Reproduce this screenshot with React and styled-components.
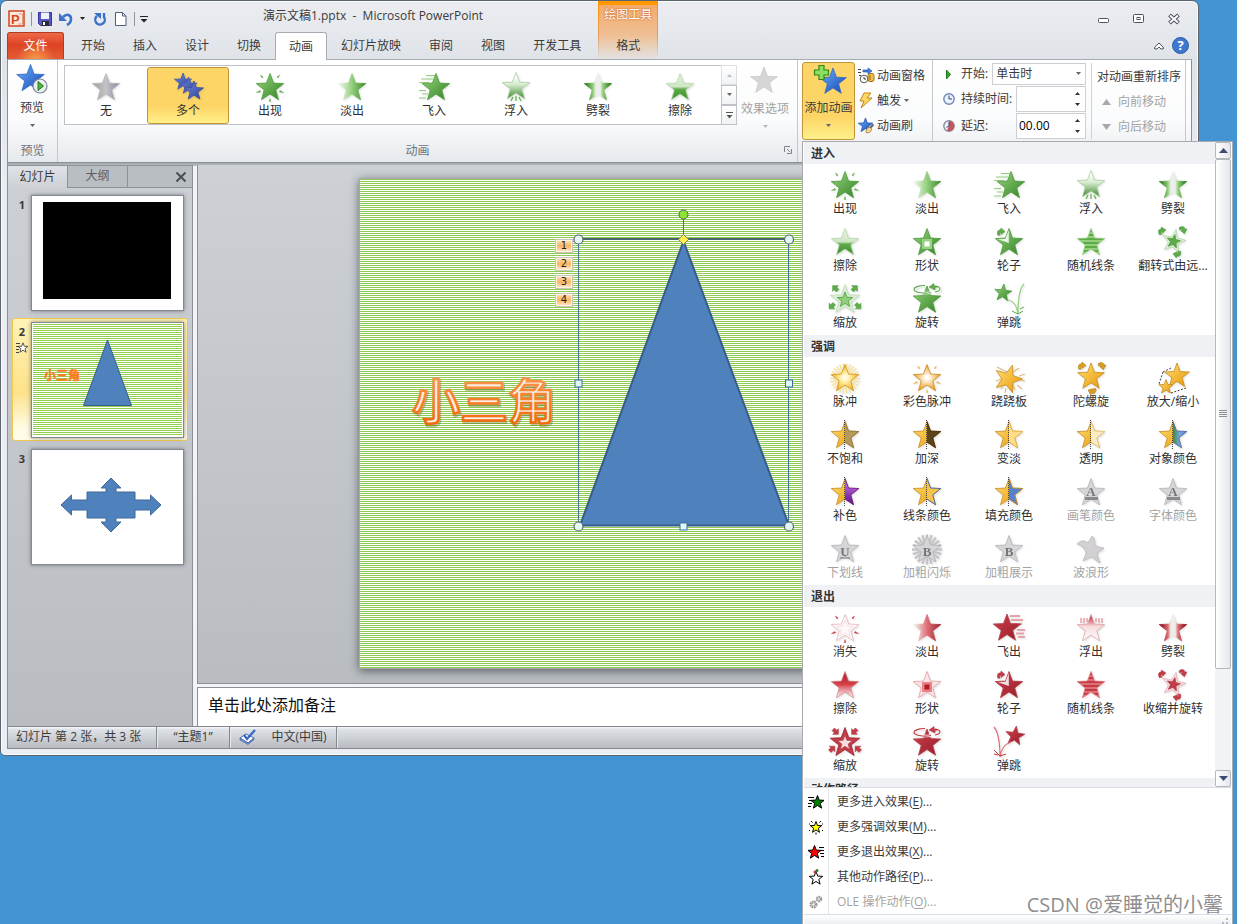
import { useState } from "react";
import styled, { createGlobalStyle } from "styled-components";

const GlobalStyle = createGlobalStyle`
  * { box-sizing: border-box; }
  body {
    margin: 0;
    background: #4294d3;
    color: #3b3b3b;
    font: 12px/16px "Open Sans", "Noto Sans CJK SC", sans-serif;
  }
  button, input, select { font: inherit; color: inherit; }
  button { padding: 0; border: none; background: none; white-space: nowrap; }
  svg { display: block; flex: none; }
`;

/* ---------- drawing helpers ---------- */

const starPoints = (cx, cy, r, turn = 0, k = 0.42) => {
  const pts = [];
  for (let i = 0; i < 10; i++) {
    const a = ((i * 36 + turn - 90) * Math.PI) / 180;
    const d = i % 2 ? r * k : r;
    pts.push(`${(cx + d * Math.cos(a)).toFixed(2)},${(cy + d * Math.sin(a)).toFixed(2)}`);
  }
  return pts.join(" ");
};

const Star = ({ x = 16, y = 17, r = 14.5, turn, ...rest }) => (
  <polygon points={starPoints(x, y, r, turn)} strokeWidth="0.8" strokeLinejoin="round" {...rest} />
);

const tones = {
  green: { dark: "#3c8a2b", mid: "#5eab49", light: "#93cf7c", pale: "#d9ecd2", line: "#4c9a3c" },
  red: { dark: "#9c1f2c", mid: "#c23b45", light: "#de7178", pale: "#f6dcdd", line: "#b2404a" },
};

const Gradients = () => (
  <Defs aria-hidden="true">
    <defs>
      {Object.entries(tones).map(([name, t]) => (
        <g key={name}>
          <linearGradient id={`${name}-solid`} x2="1" y2="1">
            <stop offset="0.2" stopColor={name === "red" ? t.mid : "#84c56c"} />
            <stop offset="0.9" stopColor={t.dark} />
          </linearGradient>
          <linearGradient id={`${name}-fade`}>
            <stop offset="0" stopColor="#f4faf1" />
            <stop offset="0.5" stopColor={t.light} />
            <stop offset="1" stopColor={t.dark} />
          </linearGradient>
          <linearGradient id={`${name}-rise`} x2="0" y2="1">
            <stop offset="0.1" stopColor={name === "red" ? t.mid : "#fff"} />
            <stop offset="0.45" stopColor={t.pale} />
            <stop offset="1" stopColor={name === "red" ? "#fff" : t.dark} />
          </linearGradient>
          <linearGradient id={`${name}-split`}>
            <stop offset="0.1" stopColor={t.dark} />
            <stop offset="0.32" stopColor={t.light} />
            <stop offset="0.42" stopColor="#ecefe9" />
            <stop offset="0.58" stopColor="#ecefe9" />
            <stop offset="0.68" stopColor={t.light} />
            <stop offset="0.9" stopColor={t.dark} />
          </linearGradient>
          <linearGradient id={`${name}-wipe`} x2="0" y2="1">
            <stop offset="0" stopColor={name === "red" ? t.dark : "#e6f2e1"} />
            <stop offset="0.5" stopColor={name === "red" ? "#d84048" : "#cfe6c6"} />
            <stop offset="0.6" stopColor={name === "red" ? t.light : t.mid} />
            <stop offset="1" stopColor={name === "red" ? "#fff" : t.dark} />
          </linearGradient>
          <linearGradient id={`${name}-bars`} gradientUnits="userSpaceOnUse" x1="0" y1="0" x2="0" y2="4" spreadMethod="repeat">
            <stop offset="0" stopColor={t.mid} />
            <stop offset="0.5" stopColor={t.mid} />
            <stop offset="0.5" stopColor={t.light} />
            <stop offset="1" stopColor={t.light} />
          </linearGradient>
        </g>
      ))}
      <linearGradient id="gold" x2="1" y2="1">
        <stop offset="0.2" stopColor="#fbd25c" />
        <stop offset="0.9" stopColor="#ea9c10" />
      </linearGradient>
      <radialGradient id="glow">
        <stop offset="0" stopColor="#fff" />
        <stop offset="0.3" stopColor="#fff3b0" />
        <stop offset="1" stopColor="#f3b021" />
      </radialGradient>
      <radialGradient id="glow-warm">
        <stop offset="0.1" stopColor="#fff" />
        <stop offset="1" stopColor="#ef9f1a" />
      </radialGradient>
      <linearGradient id="gray" x2="1" y2="0">
        <stop offset="0.2" stopColor="#ababab" />
        <stop offset="0.5" stopColor="#c4c4c4" />
        <stop offset="1" stopColor="#7f88a5" />
      </linearGradient>
      <linearGradient id="blue" x2="1" y2="1">
        <stop offset="0.2" stopColor="#5c9df0" />
        <stop offset="0.9" stopColor="#1c50b8" />
      </linearGradient>
      <linearGradient id="indigo" x2="1" y2="1">
        <stop offset="0" stopColor="#7388d8" />
        <stop offset="1" stopColor="#2b409c" />
      </linearGradient>
      <linearGradient id="purple" x2="0" y2="1">
        <stop offset="0.3" stopColor="#b25ada" />
        <stop offset="1" stopColor="#5c1586" />
      </linearGradient>
      <linearGradient id="green-blue">
        <stop offset="0.5" stopColor="#3a8c38" />
        <stop offset="0.75" stopColor="#7ba7e6" />
        <stop offset="1" stopColor="#4a78cc" />
      </linearGradient>
      <linearGradient id="orange-line" x2="0" y2="1">
        <stop offset="0.1" stopColor="#fb9a54" />
        <stop offset="0.9" stopColor="#f06a08" />
      </linearGradient>
      <clipPath id="right-half">
        <rect x="16" y="0" width="16" height="32" />
      </clipPath>
    </defs>
  </Defs>
);

const Rays = ({ color }) => (
  <path
    d="M6.500 4l2.500 2-1 1zM25.500 4l-2.500 2 1 1zM2.500 21.500l3.500-2 .5 1.500zM29.500 21.500l-3.500-2-.5 1.500zM15.300 30.500l.7-3 .7 3z"
    fill={color}
    stroke={color}
    strokeWidth="0.5"
  />
);

const BlockArrow = ({ x, y, turn, color }) => (
  <path
    d="M0-4.500L4.500 0H2v3.500h-4V0h-2.500z"
    transform={`translate(${x} ${y}) rotate(${turn}) scale(.9)`}
    fill={color.mid}
    stroke={color.line}
    strokeWidth="0.6"
  />
);

const CurvedArrow = ({ x, y, turn = 0, color, stroke }) => (
  <path
    d="M-4 4c-1.500-5 .5-7 3.500-6.500l.5-2.500L5-.5 0 3V.5c-1.500 0-2 1-1 3.500z"
    transform={`translate(${x} ${y}) rotate(${turn}) scale(.8)`}
    fill={color}
    stroke={stroke}
    strokeWidth="0.7"
  />
);

const sweep = (n, r1, r2, color, width = 1) =>
  Array.from({ length: n }, (_, i) => {
    const a = (i * 2 * Math.PI) / n;
    return (
      <line
        key={i}
        x1={16 + r1 * Math.cos(a)}
        y1={16.5 + r1 * Math.sin(a)}
        x2={16 + r2 * Math.cos(a)}
        y2={16.5 + r2 * Math.sin(a)}
        stroke={color}
        strokeWidth={width}
      />
    );
  });

const halves = {
  dull: ["#b59a5c", "#8e7440"],
  dark: ["#5a451a", "#3c2c08"],
  light: ["#fddc8a", "#e9b54c"],
  clear: ["#faebc4", "#e6c882"],
  object: ["url(#green-blue)", "#4a74c0"],
  purple: ["url(#purple)", "#6c1f96"],
  line: ["#f7c54c", "#2c5fb4"],
  fill: ["#5582cc", "#c08a26"],
};

const shapes = {
  appear: (t, n) => (
    <>
      <Star fill={`url(#${n}-solid)`} stroke={t.line} />
      <Rays color={t.mid} />
    </>
  ),
  vanish: (t) => (
    <>
      <Star fill="#fff" stroke="#e6b4b8" />
      <Star r={9} fill="#fffafa" stroke="#f2d4d6" />
      <Rays color={t.mid} />
    </>
  ),
  fade: (t, n) => <Star fill={`url(#${n}-fade)`} stroke={`url(#${n}-fade)`} />,
  flyIn: (t, n) => (
    <>
      <path d="M8 4.500h9M3 8h12M1 11.500h10M1 19.500h7M4 23h6M1 27h7" stroke={t.light} strokeWidth="1.200" />
      <Star x={18} fill={`url(#${n}-solid)`} stroke={t.line} />
    </>
  ),
  flyOut: (t, n) => (
    <>
      <path d="M17 4h10M18 8h12M20 12h9M24 18h8M23 21.500h8M25 25h7" stroke="#e3a3a8" strokeWidth="1.800" />
      <Star x={14} y={16.5} fill={`url(#${n}-solid)`} stroke={t.line} />
    </>
  ),
  floatIn: (t, n) => (
    <>
      <Star y={16} fill={`url(#${n}-rise)`} stroke="#a9cfa0" />
      <path d="M16 25v5M13 26l-2 4M19 26l2 4" stroke={t.mid} strokeWidth="1.200" />
    </>
  ),
  floatOut: (t, n) => (
    <>
      <Star fill={`url(#${n}-rise)`} stroke="#dda6aa" />
      <path d="M6 6v5M9 6v5M12 6v4M21 6v4M24 6v5M27 6v5" stroke={t.light} strokeWidth="1" />
    </>
  ),
  split: (t, n) => <Star fill={`url(#${n}-split)`} stroke={`url(#${n}-split)`} />,
  wipe: (t, n) => <Star fill={`url(#${n}-wipe)`} stroke={n === "red" ? "#d3868c" : "#b7d8ac"} />,
  shape: (t, n) => (
    <>
      <Star fill={n === "red" ? "#fbe4e5" : `url(#${n}-solid)`} stroke={n === "red" ? "#dfa0a5" : t.line} />
      <rect x="11" y="13" width="10" height="10" fill={n === "red" ? "#ec8288" : "#9ad284"} />
      <rect x="13.500" y="15.500" width="5" height="5" fill={n === "red" ? "#b01c26" : "#fff"} />
    </>
  ),
  wheel: (t, n) => (
    <>
      <Star fill={`url(#${n}-solid)`} stroke={t.line} />
      <path d="M15.800 4v13L5 13.300l7.500-.6z" fill="#fff" opacity="0.85" />
      <CurvedArrow x={8} y={6} color={t.mid} stroke={t.line} />
    </>
  ),
  bars: (t, n) => <Star fill={`url(#${n}-bars)`} stroke={t.light} />,
  turnZoom: (t) => (
    <>
      <Star x={16.5} y={15.5} r={12.5} turn={12} fill={t.pale} stroke={t.line} strokeOpacity="0.3" />
      <Star x={16.5} y={15.5} r={7} turn={12} fill={t.mid} stroke={t.line} />
      <CurvedArrow x={5} y={5} turn={-10} color={t.mid} stroke={t.line} />
      <CurvedArrow x={26} y={4} turn={75} color={t.mid} stroke={t.line} />
      <CurvedArrow x={20} y={28} turn={190} color={t.mid} stroke={t.line} />
    </>
  ),
  zoom: (t, n) => {
    const out = n === "green" ? 0 : 180;
    return (
      <>
        <Star r={15.5} fill={n === "red" ? t.mid : t.pale} stroke={n === "red" ? t.dark : "#bcdcb2"} />
        <Star r={8} fill={n === "red" ? t.pale : t.light} stroke={t.line} />
        <BlockArrow x={6.5} y={5.5} turn={-45 + out} color={t} />
        <BlockArrow x={25.5} y={5.5} turn={45 + out} color={t} />
        <BlockArrow x={3} y={23} turn={-135 + out} color={t} />
        <BlockArrow x={29} y={23} turn={135 + out} color={t} />
      </>
    );
  },
  spin: (t, n) => (
    <>
      <Star y={17.5} fill={`url(#${n}-solid)`} stroke={t.line} />
      <path d="M20 9.500C12 11 3 9 3 6.500S8 2.500 14 2.500M24 3c7 1 6 5 0 6" fill="none" stroke="#fff" strokeWidth="2.600" />
      <path d="M20 9.500C12 11 3 9 3 6.500S8 2.500 14 2.500M24 3c7 1 6 5 0 6" fill="none" stroke={t.mid} strokeWidth="1.200" />
      <path d="M23 .5l-5 3.500 6 3V5l3-1.500-4-.5z" fill={t.mid} stroke={t.line} strokeWidth="0.600" />
    </>
  ),
  bounceIn: (t, n) => (
    <>
      <Star x={10} y={10} r={9} turn={6} fill={`url(#${n}-solid)`} stroke={t.line} />
      <path d="M15 17c6 1 9 7 10 14M25 31c0-12 1-25 6-30" fill="none" stroke={t.light} strokeWidth="1.200" />
      <path d="M19 28l6 3 5-3M27 26l4-2" fill="none" stroke={t.mid} strokeWidth="1" />
    </>
  ),
  bounceOut: (t, n) => (
    <>
      <Star x={22} y={10} r={10} turn={8} fill={`url(#${n}-solid)`} stroke={t.line} />
      <path d="M1 1c5 6 6 18 6 30M7 31c1-8 5-13 11-15" fill="none" stroke={t.light} strokeWidth="1.200" />
      <path d="M1 24l6 6 6-2M5 29l-4-1" fill="none" stroke={t.mid} strokeWidth="1" />
    </>
  ),
  none: () => <Star fill="url(#gray)" stroke="#b8b8b8" />,
  multi: () => (
    <>
      <Star x={11} y={11} r={9} fill="url(#indigo)" stroke="#4358aa" />
      <Star x={16.5} y={15} r={9} fill="url(#indigo)" stroke="#4358aa" />
      <Star x={22} y={20} r={10} fill="url(#indigo)" stroke="#3a4f9e" />
    </>
  ),
  pulse: () => (
    <>
      {sweep(26, 5, 15, "#f8e290", 1.3)}
      <Star fill="url(#glow)" stroke="#cf9422" />
    </>
  ),
  colorPulse: () => (
    <>
      <Star fill="url(#glow-warm)" stroke="#c88c26" />
      <Rays color="#e6b45a" />
    </>
  ),
  teeter: () => (
    <>
      <path d="M4 5l10 5M26 6l-8 5M3 19l5-2M8 27l3-6M12 31l1-5M22 28l-2-5M24 23l5 4M26 14l6-2M27 18l5 1" stroke="#e5bb80" strokeWidth="1.200" />
      <Star x={15} turn={18} fill="url(#gold)" stroke="#c58a22" />
    </>
  ),
  spinner: () => (
    <>
      <Star y={15} r={14} fill="url(#gold)" stroke="#c58a22" />
      <CurvedArrow x={7} y={4} color="#dd9f22" stroke="#a87818" />
      <CurvedArrow x={27} y={4} turn={75} color="#dd9f22" stroke="#a87818" />
      <CurvedArrow x={17} y={29} turn={200} color="#dd9f22" stroke="#a87818" />
    </>
  ),
  grow: () => (
    <>
      <path d="M6 10l-4 12M6 10l8-4M14 31l15-5" fill="none" stroke="#444" strokeDasharray="2 1.500" />
      <Star x={20} y={14} r={13} fill="url(#gold)" stroke="#c58a22" />
      <Star x={9} y={25} r={7.5} fill="url(#gold)" stroke="#c58a22" />
    </>
  ),
  wave: () => (
    <path
      d="M2 11c5-5 9-3 11-1l4-7c2 1 3 4 3 9 3 2 5 3 9 3-3 3-6 4-7 6l3 9c-3-1-6-5-9-6-3 1-5 3-8 4 1-4 3-5 3-9-2-4-5-7-9-8z"
      fill="#d2d0d3"
      stroke="#b9b7ba"
      strokeWidth="0.8"
    />
  ),
};

const EffectIcon = ({ kind, tone }) => {
  const [name, arg] = kind.split(":");
  let art;
  if (name === "half") {
    const [fill, line] = halves[arg];
    art = (
      <>
        <Star fill="url(#gold)" stroke="#c58a22" />
        <Star fill={fill} stroke={line} clipPath="url(#right-half)" />
        <path d="M15.500 1v29" stroke="#444" strokeDasharray="1 1" />
      </>
    );
  } else if (name === "letter") {
    art = (
      <>
        {arg === "B*" && sweep(20, 5, 15, "#c6c4c6", 2.4)}
        <Star fill="#d6d5d8" stroke="#b4b3b6" />
        <text x="16" y={arg === "A" ? 20 : 23} textAnchor="middle" fontFamily="Liberation Serif" fontWeight="bold" fontSize="13" fill="#77757a">
          {arg[0]}
        </text>
        {arg === "A" && <path d="M10 22.500h13" stroke="#8b898d" strokeWidth="3" />}
        {arg === "U" && <path d="M11 25h10" stroke="#77757a" />}
      </>
    );
  } else {
    art = shapes[name](tones[tone], tone);
  }
  return (
    <IconBox width="32" height="32" viewBox="0 0 32 32">
      {art}
    </IconBox>
  );
};

/* ---------- data ---------- */

const tabs = ["开始", "插入", "设计", "切换", "动画", "幻灯片放映", "审阅", "视图", "开发工具"];

const ribbonEffects = [
  ["无", "none"],
  ["多个", "multi"],
  ["出现", "appear"],
  ["淡出", "fade"],
  ["飞入", "flyIn"],
  ["浮入", "floatIn"],
  ["劈裂", "split"],
  ["擦除", "wipe"],
];

const sections = [
  {
    title: "进入",
    tone: "green",
    items: [
      ["出现", "appear"],
      ["淡出", "fade"],
      ["飞入", "flyIn"],
      ["浮入", "floatIn"],
      ["劈裂", "split"],
      ["擦除", "wipe"],
      ["形状", "shape"],
      ["轮子", "wheel"],
      ["随机线条", "bars"],
      ["翻转式由远...", "turnZoom"],
      ["缩放", "zoom"],
      ["旋转", "spin"],
      ["弹跳", "bounceIn"],
    ],
  },
  {
    title: "强调",
    tone: "gold",
    items: [
      ["脉冲", "pulse"],
      ["彩色脉冲", "colorPulse"],
      ["跷跷板", "teeter"],
      ["陀螺旋", "spinner"],
      ["放大/缩小", "grow"],
      ["不饱和", "half:dull"],
      ["加深", "half:dark"],
      ["变淡", "half:light"],
      ["透明", "half:clear"],
      ["对象颜色", "half:object"],
      ["补色", "half:purple"],
      ["线条颜色", "half:line"],
      ["填充颜色", "half:fill"],
      ["画笔颜色", "letter:A", true],
      ["字体颜色", "letter:A", true],
      ["下划线", "letter:U", true],
      ["加粗闪烁", "letter:B*", true],
      ["加粗展示", "letter:B", true],
      ["波浪形", "wave", true],
    ],
  },
  {
    title: "退出",
    tone: "red",
    items: [
      ["消失", "vanish"],
      ["淡出", "fade"],
      ["飞出", "flyOut"],
      ["浮出", "floatOut"],
      ["劈裂", "split"],
      ["擦除", "wipe"],
      ["形状", "shape"],
      ["轮子", "wheel"],
      ["随机线条", "bars"],
      ["收缩并旋转", "turnZoom"],
      ["缩放", "zoom"],
      ["旋转", "spin"],
      ["弹跳", "bounceOut"],
    ],
  },
  { title: "动作路径", tone: "green", items: [] },
];

const moreItems = [
  { label: "更多进入效果", hotkey: "E", fill: "#008000", lines: "M0 3.500h6M1 6.500h3M0 9.500h4M0 12.500h3" },
  { label: "更多强调效果", hotkey: "M", fill: "#ffff00", rays: true },
  { label: "更多退出效果", hotkey: "X", fill: "#ff0000", lines: "M11 3.500h5M13 6.500h3M12 9.500h4M13 12.500h3" },
  { label: "其他动作路径", hotkey: "P", fill: "#fff", path: true },
  { label: "OLE 操作动作", hotkey: "O", disabled: true },
];

const MoreIcon = ({ item }) => (
  <svg width="16" height="16" viewBox="0 0 16 16">
    {item.disabled ? (
      <g fill="none" stroke="#9a9a9a">
        <circle cx="5.500" cy="10.500" r="2.500" strokeWidth="3" strokeDasharray="1.500 0.500" />
        <circle cx="11" cy="5" r="2" strokeWidth="2.500" strokeDasharray="1.500 0.500" />
      </g>
    ) : (
      <>
        <Star
          x={item.lines ? (item.hotkey === "E" ? 9.5 : 6.5) : 8}
          y={item.path ? 9.5 : 8.5}
          r={item.rays ? 6 : 7}
          fill={item.fill}
          stroke="#000"
          strokeWidth="1"
        />
        {item.lines && <path d={item.lines} stroke="#000" />}
        {item.rays && (
          <path d="M3 2l1.500 1.500M13 2l-1.500 1.500M1 5h1M14 5h1M1 12l1-1M15 12l-1-1M8 13.500v2" stroke="#000" />
        )}
        {item.path && (
          <>
            <circle cx="7" cy="3" r="1.500" fill="#c33" />
            <circle cx="9" cy="1.500" r="1.500" fill="#2c7a2c" />
          </>
        )}
      </>
    )}
  </svg>
);

/* ---------- small parts ---------- */

const Caret = ({ color = "#666", up }) => (
  <svg width="7" height="4" viewBox="0 0 7 4">
    <path d={up ? "M1 4h5L3.500 1z" : "M1 0h5L3.500 3z"} fill={color} />
  </svg>
);

const EffectTile = ({ label, kind, tone, disabled, selected }) => (
  <Tile disabled={disabled} $selected={selected}>
    <EffectIcon kind={kind} tone={tone} />
    <span>{label}</span>
  </Tile>
);

const BlueStar = ({ badge }) => (
  <svg width="36" height="36" viewBox="0 0 36 36">
    {badge === "plus" && (
      <>
        <Star x={22} y={18} r={14} fill="url(#blue)" stroke="#2f66c0" />
        <path d="M7 1.500h5v4.500h4.500v5H12v4.500H7V11H2.500V6H7z" fill="#8ae060" stroke="#2d8a18" strokeWidth="1.200" transform="translate(1)" />
      </>
    )}
    {badge === "play" && (
      <>
        <Star x={16.5} y={15} r={14.5} fill="url(#blue)" stroke="#2f66c0" />
        <circle cx="26" cy="22" r="7" fill="#eceff2" stroke="#7c8590" strokeWidth="1.200" />
        <path d="M24 17.500l5.500 4.500-5.500 4.500z" fill="#48b838" stroke="#257a1c" />
      </>
    )}
    {!badge && <Star x={17} y={16} r={14} fill="#d6d6d8" stroke="#c8c8ca" />}
  </svg>
);

const Clock = ({ red }) => (
  <svg width="16" height="16" viewBox="0 0 16 16">
    <circle cx="8" cy="8" r="5.200" fill="#eaf1fb" stroke={red ? "#8a8a9a" : "#6f87b8"} strokeWidth="1.400" />
    {red && <path d="M8 8V3a5 5 0 1 1-2 9.500z" fill="#c9545a" />}
    <path d={red ? "M8 4v4L5.500 9.500" : "M8 4.500V8h3"} fill="none" stroke="#34496f" />
  </svg>
);

const PaneIcon = () => (
  <svg width="17" height="17" viewBox="0 0 17 17">
    <path d="M0 2.500h3M0 5.500h3M1 8.500h2" stroke="#444" />
    <path d="M5 3h5V1l4 3-4 3V5H5z" fill="#3f7ad8" stroke="#1f4f9c" strokeWidth="0.600" />
    <circle cx="6" cy="12" r="3.800" fill="#fff" stroke="#555" />
    <path d="M6 10v2h2" stroke="#333" fill="none" />
    <rect x="10" y="6.500" width="6" height="8" rx="2" fill="#f1c04a" stroke="#9c7014" />
    <path d="M12 8v5" stroke="#8b6414" />
  </svg>
);

const BoltIcon = () => (
  <svg width="17" height="17" viewBox="0 0 17 17">
    <path d="M6 1h7L9 6h5L3 16l3-7H2z" fill="#ffd95e" stroke="#c08420" strokeLinejoin="round" />
  </svg>
);

const BrushIcon = () => (
  <svg width="17" height="17" viewBox="0 0 17 17">
    <Star x={7.5} y={8.5} r={7.5} fill="url(#blue)" stroke="#24529f" />
    <path d="M15.500 7.500l-4 4" stroke="#5c6270" strokeWidth="2" />
    <path d="M12 10.500c-2-.5-4 1-4 5 3 1 6-1 5.500-4z" fill="#f6d68a" stroke="#9a7b34" strokeWidth="0.800" />
  </svg>
);

const QuickAccess = () => (
  <QatBar>
    <svg width="18" height="18" viewBox="0 0 18 18">
      <rect x="1" y="1" width="15" height="15" fill="#fbe9e1" stroke="#cf3a10" strokeWidth="1.400" />
      <path d="M11 4h3.500v10H10" fill="none" stroke="#e59a78" />
      <text x="3" y="13.500" fontSize="13" fontWeight="bold" fontFamily="Liberation Sans" fill="#d84a10">P</text>
    </svg>
    <QatRule />
    <QatButton aria-label="保存">
      <svg width="16" height="16" viewBox="0 0 16 16">
        <path d="M1.500 1.500h13v13h-11l-2-2z" fill="#5a58c8" stroke="#34339a" />
        <rect x="4" y="1.500" width="8" height="6.500" fill="#eef2fb" />
        <rect x="5" y="10" width="7" height="5" fill="#2a2a38" />
        <rect x="6" y="11" width="2" height="3" fill="#fff" />
      </svg>
    </QatButton>
    <QatButton aria-label="撤消">
      <svg width="16" height="16" viewBox="0 0 16 16">
        <path d="M5 6c4-4 8-2 8 2 0 3-2 5-4 6" fill="none" stroke="#3d72cc" strokeWidth="2.600" />
        <path d="M1 2v8h8z" fill="#3d72cc" />
      </svg>
    </QatButton>
    <QatCaret aria-label="撤消列表"><Caret color="#222" /></QatCaret>
    <QatButton aria-label="恢复">
      <svg width="16" height="16" viewBox="0 0 16 16">
        <path d="M5 5a4.800 4.800 0 1 0 7 1V2" fill="none" stroke="#3a6fca" strokeWidth="2.400" />
        <path d="M2 2h7v6z" fill="#3a6fca" />
      </svg>
    </QatButton>
    <QatButton aria-label="新建">
      <svg width="16" height="16" viewBox="0 0 16 16">
        <path d="M2.500 1.500h7l3.500 3.500v9.500H2.500z" fill="#fff" stroke="#4e5e74" />
        <path d="M9.500 1.500V5H13" fill="none" stroke="#4e5e74" />
      </svg>
    </QatButton>
    <QatRule />
    <QatCaret aria-label="自定义快速访问工具栏">
      <svg width="8" height="7" viewBox="0 0 8 7">
        <path d="M0 .5h8" stroke="#222" />
        <path d="M.5 3h7L4 6.500z" fill="#222" />
      </svg>
    </QatCaret>
  </QatBar>
);

const SpinField = ({ id, value, onChange }) => (
  <SpinBox>
    <input id={id} value={value} onChange={(e) => onChange(e.target.value)} />
    <div>
      <button aria-label="增加"><Caret up color="#333" /></button>
      <button aria-label="减少"><Caret color="#333" /></button>
    </div>
  </SpinBox>
);

const Handle = ({ x, y, round }) =>
  round ? (
    <circle cx={x} cy={y} r="4.500" fill="#e3f7f7" stroke="#56646e" strokeWidth="1.200" />
  ) : (
    <rect x={x - 3.5} y={y - 3.5} width="7" height="7" fill="#e0fbff" stroke="#3c7099" />
  );

const AddMenu = () => (
  <Menu>
    <MenuGallery>
      <MenuList>
        {sections.map((s) => (
          <section key={s.title}>
            <MenuHeading>{s.title}</MenuHeading>
            <TileGrid>
              {s.items.map(([label, kind, disabled]) => (
                <EffectTile key={label} label={label} kind={kind} tone={s.tone} disabled={disabled} />
              ))}
            </TileGrid>
          </section>
        ))}
      </MenuList>
      <ScrollTrack>
        <ScrollButton aria-label="向上滚动">
          <svg width="9" height="5" viewBox="0 0 9 5"><path d="M0 5h9L4.500 0z" fill="#3e4a70" /></svg>
        </ScrollButton>
        <ScrollThumb>
          <svg width="8" height="8" viewBox="0 0 8 8">
            <path d="M0 .5h8M0 2.500h8M0 4.500h8M0 6.500h8" stroke="#8b9096" />
          </svg>
        </ScrollThumb>
        <ScrollButton aria-label="向下滚动" $end>
          <svg width="9" height="5" viewBox="0 0 9 5"><path d="M0 0h9L4.500 5z" fill="#3e4a70" /></svg>
        </ScrollButton>
      </ScrollTrack>
    </MenuGallery>
    <MoreList>
      {moreItems.map((item) => (
        <MoreItem key={item.hotkey} disabled={item.disabled}>
          <MoreIcon item={item} />
          <span>
            {item.label}(<u>{item.hotkey}</u>)...
          </span>
        </MoreItem>
      ))}
    </MoreList>
    <MenuFoot>
      <svg width="10" height="10" viewBox="0 0 10 10">
        <path d="M7 1h2v2H7zM3 5h2v2H3zM7 5h2v2H7zM0 9h2v1H0zM3 9h2v1H3zM7 9h2v1H7z" fill="#b4bac2" />
      </svg>
    </MenuFoot>
  </Menu>
);

const SlideArt = () => (
  <SlideSvg width="652" height="489" viewBox="0 0 652 489">
    <g fontFamily="Noto Sans CJK SC" fontSize="48" fontWeight="500">
      <text x="53" y="242" fill="none" stroke="#55641f" strokeOpacity="0.4" strokeWidth="3">小三角</text>
      <text x="52" y="240" fill="#fdeee2" stroke="url(#orange-line)" strokeWidth="2.500">小三角</text>
    </g>
    <polygon points="323.5,62 220,346.5 429,346.5" fill="#4f81bd" stroke="#385d8a" strokeWidth="2" strokeLinejoin="round" />
    <path d="M218.500 60.500v287M428.500 60.500v287M323.500 60v-20" fill="none" stroke="#42719b" />
    <path d="M218 60h211" stroke="#4a6572" strokeWidth="2" />
    <circle cx="323.500" cy="35.500" r="4.500" fill="#8ae234" stroke="#55663f" />
    <path d="M323.500 55.500l5 5-5 5-5-5z" fill="#fff04a" stroke="#8d8a4d" />
    <Handle x={218.5} y={60.5} round />
    <Handle x={429} y={60.5} round />
    <Handle x={218.5} y={347.5} round />
    <Handle x={429} y={347.5} round />
    <Handle x={218.5} y={204.5} />
    <Handle x={429} y={204.5} />
    <Handle x={323.5} y={347.5} />
  </SlideSvg>
);

/* ---------- page ---------- */

export default function App() {
  const [start, setStart] = useState("单击时");
  const [duration, setDuration] = useState("");
  const [delay, setDelay] = useState("00.00");

  return (
    <Desktop>
      <GlobalStyle />
      <Gradients />
      <Window>
        <Header>
          <HeaderMain>
            <TitleRow>
              <QuickAccess />
              <Title>演示文稿1.pptx&nbsp; -&nbsp; Microsoft PowerPoint</Title>
            </TitleRow>
            <TabRow>
              <FileTab>文件</FileTab>
              {tabs.map((t) => (
                <Tab key={t} $active={t === "动画"}>{t}</Tab>
              ))}
            </TabRow>
          </HeaderMain>
          <ContextTabs>
            <span>绘图工具</span>
            <button>格式</button>
          </ContextTabs>
          <HeaderSide>
            <WindowButtons>
              <button aria-label="最小化">
                <svg width="12" height="12" viewBox="0 0 12 12"><rect x="0.500" y="5.500" width="10" height="4" rx="1" fill="#fff" stroke="#4c5060" /></svg>
              </button>
              <button aria-label="最大化">
                <svg width="12" height="12" viewBox="0 0 12 12"><rect x="0.500" y="1.500" width="10" height="8" rx="1" fill="#fff" stroke="#4c5060" /><rect x="4" y="4.500" width="3" height="2" fill="none" stroke="#4c5060" /></svg>
              </button>
              <button aria-label="关闭">
                <svg width="12" height="12" viewBox="0 0 12 12">
                  <path d="M1.500 2l9 8M10.500 2l-9 8" stroke="#4c5060" strokeWidth="4" />
                  <path d="M2 2.500l8 7M10 2.500l-8 7" stroke="#fff" strokeWidth="2" />
                </svg>
              </button>
            </WindowButtons>
            <HelpButtons>
              <button aria-label="折叠功能区">
                <svg width="10" height="8" viewBox="0 0 10 8"><path d="M.8 5L5 1l4.200 4v2H7L5 5 3 7H.8z" fill="#fff" stroke="#4c5060" /></svg>
              </button>
              <button aria-label="帮助">
                <svg width="17" height="17" viewBox="0 0 17 17">
                  <circle cx="8.500" cy="8.500" r="8" fill="#3f78cc" stroke="#2a5ca8" />
                  <text x="8.500" y="13" textAnchor="middle" fontSize="13" fontWeight="bold" fill="#fff">?</text>
                </svg>
              </button>
            </HelpButtons>
          </HeaderSide>
        </Header>

        <Ribbon>
          <Group $w={50}>
            <GroupBody $pad="4px 0 0 2px">
              <BigButton>
                <BlueStar badge="play" />
                <span>预览</span>
                <Caret />
              </BigButton>
            </GroupBody>
            <GroupLabel>预览</GroupLabel>
          </Group>
          <Group $w={740}>
            <GroupBody $pad="5px 0 0 6px">
              <RibbonGallery>
                {ribbonEffects.map(([label, kind]) => (
                  <EffectTile key={label} label={label} kind={kind} tone="green" selected={kind === "multi"} />
                ))}
                <GalleryScroll>
                  <button aria-label="上一行" disabled><Caret up color="#c0c0c4" /></button>
                  <button aria-label="下一行"><Caret /></button>
                  <button aria-label="其他">
                    <svg width="7" height="7" viewBox="0 0 7 7"><path d="M0 .5h7" stroke="#555" /><path d="M.5 3h6L3.500 6.500z" fill="#555" /></svg>
                  </button>
                </GalleryScroll>
              </RibbonGallery>
              <BigButton disabled>
                <BlueStar />
                <span>效果选项</span>
                <Caret color="#b8b8b8" />
              </BigButton>
            </GroupBody>
            <GroupLabel>
              动画
              <Launcher aria-label="动画设置">
                <svg width="8" height="8" viewBox="0 0 8 8"><path d="M.5 6V.5H6M3 3l3 3M7.500 3v4.500H3" fill="none" stroke="#80858c" /></svg>
              </Launcher>
            </GroupLabel>
          </Group>
          <Group $w={135}>
            <GroupBody $pad="2px 0 0 4px" $gap={3}>
              <MenuAnchor>
                <BigButton $selected>
                  <BlueStar badge="plus" />
                  <span>添加动画</span>
                  <Caret />
                </BigButton>
                <AddMenu />
              </MenuAnchor>
              <SmallColumn>
                <SmallButton><PaneIcon />动画窗格</SmallButton>
                <SmallButton><BoltIcon />触发 <Caret /></SmallButton>
                <SmallButton><BrushIcon />动画刷</SmallButton>
              </SmallColumn>
            </GroupBody>
          </Group>
          <Group $w={253}>
            <TimingBody>
              <TimingColumn>
                <TimingRow>
                  <svg width="16" height="16" viewBox="0 0 16 16"><path d="M5.500 4l4 4.500-4 4.500z" fill="#2fa32a" stroke="#1e7a1a" /></svg>
                  <label htmlFor="start">开始:</label>
                  <SelectBox>
                    <select id="start" value={start} onChange={(e) => setStart(e.target.value)}>
                      <option>单击时</option>
                    </select>
                    <Caret />
                  </SelectBox>
                </TimingRow>
                <TimingRow>
                  <Clock />
                  <label htmlFor="duration">持续时间:</label>
                  <SpinField id="duration" value={duration} onChange={setDuration} />
                </TimingRow>
                <TimingRow>
                  <Clock red />
                  <label htmlFor="delay">延迟:</label>
                  <SpinField id="delay" value={delay} onChange={setDelay} />
                </TimingRow>
              </TimingColumn>
              <OrderColumn>
                <span>对动画重新排序</span>
                <OrderButton disabled>
                  <svg width="9" height="6" viewBox="0 0 9 6"><path d="M0 6h9L4.500 0z" fill="#a8a8a8" /></svg>
                  向前移动
                </OrderButton>
                <OrderButton disabled>
                  <svg width="9" height="6" viewBox="0 0 9 6"><path d="M0 0h9L4.500 6z" fill="#a8a8a8" /></svg>
                  向后移动
                </OrderButton>
              </OrderColumn>
            </TimingBody>
          </Group>
        </Ribbon>

        <Workspace>
          <SlidePanel>
            <PanelTabs>
              <PanelTab $active>幻灯片</PanelTab>
              <PanelTab>大纲</PanelTab>
              <PanelClose aria-label="关闭">
                <svg width="12" height="12" viewBox="0 0 12 12"><path d="M1.500 1.500l9 9M10.500 1.500l-9 9" stroke="#4b4f55" strokeWidth="2" /></svg>
              </PanelClose>
            </PanelTabs>
            <ThumbList>
              <ThumbItem>
                <ThumbNo>1</ThumbNo>
                <Thumb><BlackBox /></Thumb>
              </ThumbItem>
              <ThumbItem $selected>
                <ThumbNo>
                  2
                  <svg width="12" height="12" viewBox="0 0 12 12">
                    <path d="M0 1.500h4M0 4.500h3M0 7.500h3M0 10.500h3" stroke="#444" />
                    <Star x={7} y={6} r={5.2} fill="#fff" stroke="#333" />
                  </svg>
                </ThumbNo>
                <Thumb $striped>
                  <svg width="149" height="112" viewBox="0 0 149 112">
                    <polygon points="74.500,16 50.500,81.500 98.500,81.500" fill="#4f81bd" stroke="#385d8a" />
                    <text x="11" y="56" fontSize="12" fontWeight="bold" fill="#ff7a1e" stroke="#ff7a1e" strokeWidth="0.400">小三角</text>
                  </svg>
                </Thumb>
              </ThumbItem>
              <ThumbItem>
                <ThumbNo>3</ThumbNo>
                <Thumb>
                  <svg width="149" height="112" viewBox="0 0 149 112">
                    <path
                      d="M78 27l10 10h-5v4h19v8h15.500v-5l10.500 10-10.500 10v-5H102v8H83v4h5L78 81 68 71h5v-4H54v-8H38.500v5L28 54l10.500-10v5H54v-8h19v-4h-5z"
                      fill="#4f81bd"
                      stroke="#3f6a9c"
                    />
                  </svg>
                </Thumb>
              </ThumbItem>
            </ThumbList>
          </SlidePanel>
          <EditArea>
            <Canvas>
              <Slide>
                <SlideArt />
                <TagStack>
                  {[1, 2, 3, 4].map((n) => (
                    <Tag key={n}>{n}</Tag>
                  ))}
                </TagStack>
              </Slide>
            </Canvas>
            <Notes>单击此处添加备注</Notes>
          </EditArea>
        </Workspace>

        <StatusBar>
          <StatusCell $w={149} $start>幻灯片 第 2 张，共 3 张</StatusCell>
          <StatusCell $w={73}>“主题1”</StatusCell>
          <StatusCell $w={107}>
            <svg width="18" height="16" viewBox="0 0 18 16">
              <path d="M1 9l6-4 8 4-6 5z" fill="#fff" stroke="#4a6cb4" />
              <path d="M1 9v2l8 4.500 6-5V9l-6 5z" fill="#7f9fdc" stroke="#3d5ca4" strokeWidth="0.700" />
              <path d="M5 6l3 4 8-9" fill="none" stroke="#3565c8" strokeWidth="2.200" />
            </svg>
            中文(中国)
          </StatusCell>
        </StatusBar>
      </Window>
      <Watermark>CSDN @爱睡觉的小馨</Watermark>
    </Desktop>
  );
}

/* ---------- styles ---------- */

const hot = `
  border: 1px solid #c2943a;
  border-radius: 3px;
  background: linear-gradient(#fcd467, #fdd566 70%, #fff08a);
`;

const Defs = styled.svg`
  position: absolute;
  width: 0;
  height: 0;
`;
const IconBox = styled.svg`
  overflow: visible;
  filter: drop-shadow(1px 1px 1px rgba(0, 0, 0, 0.12));
`;
const Desktop = styled.div`
  position: relative;
  height: 100vh;
  overflow: hidden;
  padding-right: 38px;
`;
const Window = styled.div`
  padding: 0 6px 6px;
  border: 1px solid #5b6570;
  border-radius: 7px 7px 5px 5px;
  background: linear-gradient(#ebedf1, #dfe3e7 60px, #ecedf2 200px);
  box-shadow: inset 0 0 0 1px #fafbfd;
`;
const Header = styled.header`
  display: flex;
  height: 58px;
`;
const HeaderMain = styled.div`
  display: flex;
  flex-direction: column;
`;
const TitleRow = styled.div`
  display: flex;
  height: 31px;
`;
const QatBar = styled.div`
  display: flex;
  align-items: center;
  gap: 5px;
  width: 141px;
  padding: 5px 0 0 1px;
`;
const QatRule = styled.i`
  width: 1px;
  height: 14px;
  background: #8f959e;
`;
const QatButton = styled.button`
  width: 17px;
`;
const QatCaret = styled.button`
  width: 8px;
`;
const Title = styled.h1`
  flex: 1;
  margin: 0;
  padding-top: 7px;
  text-align: center;
  font-size: 12px;
  font-weight: normal;
`;
const TabRow = styled.nav`
  display: flex;
  height: 27px;
  padding-right: 3px;
`;
const Tab = styled.button`
  padding: 0 ${(p) => (p.$active ? 13 : 14)}px;
  ${(p) =>
    p.$active &&
    `position: relative;
     height: 28px;
     border: 1px solid #a6acb3;
     border-bottom: none;
     border-radius: 3px 3px 0 0;
     background: #fff;`}
`;
const FileTab = styled.button`
  width: 57px;
  margin: 0 3px 0 0;
  border: 1px solid #b23a20;
  border-bottom: none;
  border-radius: 3px 3px 0 0;
  background: radial-gradient(ellipse at 50% 110%, #f7a04c, transparent 50%), linear-gradient(#ee6a48, #dd4426 45%, #e65a34);
  color: #fff;
`;
const ContextTabs = styled.div`
  display: flex;
  flex-direction: column;
  align-items: center;
  width: 60px;
  border: solid #e8964a;
  border-width: 4px 1px 0;
  border-image: linear-gradient(#ff9800 0 5px, #e39a5c 35px, #e0e3e7) 4 1 0;
  background: linear-gradient(#f4ab6c, #efbf94 30px, #e2e2e2 54px);
  span {
    height: 27px;
    padding-top: 2px;
    color: #fff;
    text-shadow: 0 0 2px #c4601c, 0 0 1px #c4601c;
  }
  button {
    height: 27px;
  }
`;
const HeaderSide = styled.div`
  flex: 1;
  display: flex;
  flex-direction: column;
  align-items: flex-end;
`;
const WindowButtons = styled.div`
  display: flex;
  align-items: center;
  gap: 23px;
  height: 31px;
  padding: 4px 12px 0 0;
`;
const HelpButtons = styled.div`
  display: flex;
  align-items: center;
  gap: 8px;
  height: 27px;
  padding-right: 3px;
`;
const Ribbon = styled.div`
  display: flex;
  height: 104px;
  border: 1px solid #8b9097;
  border-top-color: #a6acb3;
  background: linear-gradient(#fff, #fafbfc 60%, #e6e9ed);
`;
const Group = styled.div`
  display: flex;
  flex: none;
  flex-direction: column;
  width: ${(p) => p.$w}px;
  border-right: 1px solid #c4c8cd;
`;
const GroupBody = styled.div`
  display: flex;
  align-items: flex-start;
  gap: ${(p) => p.$gap || 0}px;
  height: 82px;
  padding: ${(p) => p.$pad};
`;
const GroupLabel = styled.div`
  position: relative;
  padding-right: 20px;
  text-align: center;
  line-height: 18px;
  color: #6e737b;
  ${Group}:first-child & { padding-right: 0; }
`;
const Launcher = styled.button`
  position: absolute;
  right: 5px;
  top: 4px;
`;
const Tile = styled.button`
  display: flex;
  flex-direction: column;
  align-items: center;
  width: 82px;
  height: 57px;
  padding-top: 4px;
  color: ${(p) => (p.disabled ? "#a3a3a3" : "#2f2f2f")};
  ${(p) => p.$selected && hot}
  ${(p) => p.$selected && "padding-top: 3px;"}
`;
const RibbonGallery = styled.div`
  display: flex;
  align-items: center;
  height: 60px;
  border: 1px solid #bfc3c9;
  border-right: none;
  background: #fff;
`;
const GalleryScroll = styled.div`
  display: grid;
  grid-template-rows: repeat(3, 20px);
  width: 16px;
  button {
    display: grid;
    place-items: center;
    border: 1px solid #bfc3c9;
    background: linear-gradient(#fff, #f0f2f4);
    &:disabled { border-color: #dcdfe3; }
  }
`;
const BigButton = styled.button`
  display: flex;
  flex-direction: column;
  align-items: center;
  min-width: 42px;
  padding: 0 4px;
  color: ${(p) => (p.disabled ? "#a3a3a3" : "inherit")};
  svg:last-child { margin-top: 8px; }
  ${(p) => p.$selected && hot}
  ${(p) => p.$selected && "width: 53px; height: 78px; padding: 1px 0 0;"}
`;
const MenuAnchor = styled.div`
  position: relative;
  z-index: 2;
`;
const SmallColumn = styled.div`
  display: flex;
  flex-direction: column;
  padding-top: 1px;
`;
const SmallButton = styled.button`
  display: flex;
  align-items: center;
  gap: 2px;
  height: 25px;
`;
const TimingBody = styled.div`
  display: flex;
  padding: 3px 0 0 8px;
`;
const TimingColumn = styled.div`
  display: flex;
  flex-direction: column;
  gap: 1px;
  width: 151px;
  padding-right: 5px;
  border-right: 1px solid #d0d3d8;
`;
const TimingRow = styled.div`
  display: flex;
  align-items: center;
  gap: 4px;
  label { flex: 1; white-space: nowrap; }
`;
const SelectBox = styled.div`
  position: relative;
  width: 94px;
  height: 22px;
  select {
    width: 100%;
    height: 100%;
    padding: 0 3px;
    appearance: none;
    border: 1px solid #ccd0d5;
    background: #fff;
  }
  svg { position: absolute; right: 4px; top: 9px; }
`;
const SpinBox = styled.div`
  display: flex;
  width: 70px;
  height: 26px;
  border: 1px solid #ccd0d5;
  background: #fff;
  input {
    flex: 1;
    min-width: 0;
    padding: 0 2px;
    border: none;
    background: none;
    color: #000;
  }
  div {
    display: grid;
    width: 16px;
    place-items: center;
  }
`;
const OrderColumn = styled.div`
  padding: 1px 0 0 5px;
  > span { line-height: 25px; white-space: nowrap; }
`;
const OrderButton = styled.button`
  display: flex;
  align-items: center;
  gap: 7px;
  height: 25px;
  padding-left: 5px;
  color: #a3a3a3;
`;

const Menu = styled.div`
  position: absolute;
  left: 0;
  top: 79px;
  width: 431px;
  padding: 0 1px;
  border: 1px solid #a7abb0;
  background: #fff;
`;
const MenuGallery = styled.div`
  display: flex;
  height: 646px;
  border-bottom: 1px solid #d9dce0;
`;
const MenuList = styled.div`
  flex: 1;
  overflow: hidden;
`;
const MenuHeading = styled.h2`
  margin: 0;
  padding: 1px 0 0 7px;
  background: #f0f1f5;
  color: #333;
  font-size: 12px;
  line-height: 21px;
`;
const TileGrid = styled.div`
  display: grid;
  grid-template-columns: repeat(5, 82px);
  ${Tile} { padding-top: 5px; }
`;
const ScrollTrack = styled.div`
  display: flex;
  flex-direction: column;
  width: 16px;
  background: #f2f3f6;
`;
const ScrollButton = styled.button`
  display: grid;
  place-items: center;
  height: 17px;
  margin-top: ${(p) => (p.$end ? "auto" : "0")};
  border: 1px solid #b4b9c0;
  border-radius: 2px;
  background: linear-gradient(90deg, #fff, #e4e6ea);
`;
const ScrollThumb = styled.div`
  display: grid;
  place-items: center;
  height: 510px;
  border: 1px solid #b4b9c0;
  border-radius: 2px;
  background: linear-gradient(90deg, #fff, #e4e6ea);
`;
const MoreList = styled.div`
  padding-top: 1px;
  background: linear-gradient(90deg, #fff 24px, #e2e4e7 24px 25px, #fff 25px);
`;
const MoreItem = styled.button`
  display: flex;
  align-items: center;
  gap: 13px;
  width: 100%;
  height: 25px;
  padding-left: 4px;
  color: ${(p) => (p.disabled ? "#a3a3a3" : "inherit")};
  u { text-underline-offset: 2px; }
`;
const MenuFoot = styled.div`
  display: flex;
  justify-content: flex-end;
  height: 12px;
  padding: 2px 2px 0;
  border-top: 1px solid #d3dfea;
  background: linear-gradient(#fff, #e9ebef);
`;

const Workspace = styled.div`
  display: flex;
  padding-top: 2px;
  border-left: 1px solid #8b9097;
  border-right: 1px solid #8b9097;
  background: linear-gradient(#a4a8ad, #bcc0c5 3px, #f2f3f6 3px);
`;
const SlidePanel = styled.aside`
  display: flex;
  flex-direction: column;
  width: 185px;
  border-right: 1px solid #8b9097;
  background: linear-gradient(#cdd1d6, #b9bdc2);
`;
const PanelTabs = styled.div`
  display: flex;
  height: 23px;
  border-top: 1px solid #8f949b;
`;
const PanelTab = styled.button`
  width: 60px;
  padding-bottom: 1px;
  border-right: 1px solid #8b9299;
  ${(p) =>
    p.$active
      ? "background: linear-gradient(#dfe2e7, #cdd1d6);"
      : "background: #b9bec3; border-bottom: 1px solid #8b9299; color: #5d5d60;"}
`;
const PanelClose = styled.button`
  flex: 1;
  display: flex;
  align-items: center;
  justify-content: flex-end;
  padding-right: 5px;
  border-bottom: 1px solid #8b9299;
  background: #b9bec3;
`;
const ThumbList = styled.div`
  display: flex;
  flex-direction: column;
  gap: 4px;
  padding: 3px 4px;
`;
const ThumbItem = styled.div`
  display: flex;
  justify-content: space-between;
  height: 123px;
  padding: 3px;
  border: 1px solid ${(p) => (p.$selected ? "#f2cb4e" : "transparent")};
  border-radius: 3px;
  background: ${(p) => (p.$selected ? "linear-gradient(#fff3b8, #fde28a 60%, #fffbe4 90%)" : "none")};
`;
const ThumbNo = styled.div`
  display: flex;
  flex-direction: column;
  align-items: center;
  width: 12px;
  padding-top: 2px;
  font: bold 11px/16px "Noto Sans", sans-serif;
  svg { margin-top: 2px; }
`;
const Thumb = styled.div`
  width: 153px;
  height: 116px;
  padding: 1px;
  border: 1px solid #84898f;
  background: ${(p) => (p.$striped ? "repeating-linear-gradient(#92d050 0 1px, #fff 1px 2px) content-box, #fff" : "#fff")};
  box-shadow: 0 0 4px rgba(60, 64, 70, 0.6);
`;
const BlackBox = styled.div`
  width: 128px;
  height: 97px;
  margin: 5px 0 0 10px;
  background: #000;
`;
const EditArea = styled.main`
  flex: 1;
  min-width: 0;
  margin-left: 4px;
`;
const Canvas = styled.div`
  display: flex;
  justify-content: center;
  padding: 14px 16px 15px 0;
  border: 1px solid #8b9097;
  border-top: none;
  background: linear-gradient(#cdd1d6, #b9bdc2);
`;
const Slide = styled.div`
  position: relative;
  flex: none;
  width: 652px;
  height: 489px;
  background: repeating-linear-gradient(#90cc54 0 1px, #fff 1px 2px);
  box-shadow: 0 0 0 1px #a5a9ad, 0 2px 9px 1px rgba(40, 44, 48, 0.65);
`;
const SlideSvg = styled.svg`
  position: absolute;
  left: 0;
  top: 0;
`;
const TagStack = styled.div`
  position: absolute;
  left: 195px;
  top: 60px;
  display: flex;
  flex-direction: column;
  gap: 4px;
`;
const Tag = styled.span`
  width: 18px;
  height: 14px;
  border: 1px solid #ccc3ba;
  background: linear-gradient(#fee3c0, #fdb45c 50%, #feecd6);
  box-shadow: inset 0 0 0 1px #fff3e2;
  color: #222;
  font: 10px/12px "DejaVu Sans", sans-serif;
  text-align: center;
`;
const Notes = styled.div`
  height: 39px;
  margin-top: 3px;
  padding: 5px 10px;
  border: 1px solid #8b9097;
  border-bottom: none;
  background: #fff;
  color: #111;
  font-size: 16px;
  line-height: 24px;
`;
const StatusBar = styled.footer`
  display: flex;
  height: 23px;
  border: 1px solid #83888f;
  background: linear-gradient(#f2f4f6 1px, #dfe2e6 2px, #b8bcc2);
`;
const StatusCell = styled.div`
  display: flex;
  align-items: center;
  justify-content: ${(p) => (p.$start ? "flex-start" : "center")};
  gap: 14px;
  min-width: ${(p) => p.$w}px;
  padding: 0 8px 1px;
  border-right: 1px solid #84898f;
  box-shadow: 1px 0 0 #e6e8eb;
`;
const Watermark = styled.div`
  position: absolute;
  right: 14px;
  bottom: 5px;
  z-index: 3;
  color: #8e8e90;
  font-size: 20px;
  line-height: 28px;
`;
